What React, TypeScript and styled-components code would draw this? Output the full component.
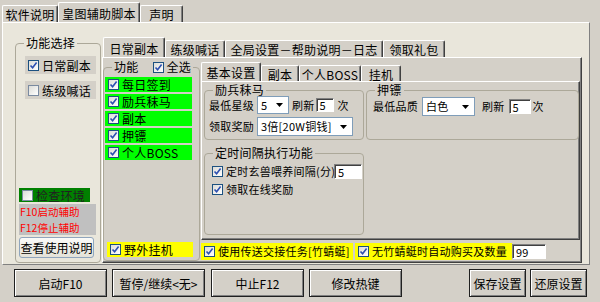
import React from 'react';
import styled, { createGlobalStyle, css } from 'styled-components';

const GlobalStyle = createGlobalStyle`
  html, body {
    margin: 0;
    padding: 0;
    background: #d4d0c8;
  }
  body {
    font-family: "Noto Sans CJK SC", "DejaVu Sans", sans-serif;
    font-size: 11px;
    letter-spacing: 0.25px;
    line-height: 13px;
    color: #000;
  }
`;

const Window = styled.div`
  width: 600px;
  height: 302px;
  box-sizing: border-box;
  padding-top: 2px;
  background: #d4d0c8;
  overflow: hidden;
`;

/* ---------- tabs ---------- */

const TabRow = styled.div<{ $h: number; $pl?: number }>`
  display: flex;
  align-items: flex-end;
  height: ${p => p.$h}px;
  padding-left: ${p => p.$pl ?? 0}px;
`;

const Tab = styled.div<{ $w: number; $active?: boolean; $h: number; $fs?: number }>`
  box-sizing: border-box;
  width: ${p => p.$w}px;
  height: ${p => (p.$active ? p.$h : p.$h - 3)}px;
  display: flex;
  align-items: center;
  justify-content: center;
  white-space: nowrap;
  font-size: ${p => p.$fs ?? 12}px;
  background: #d4d0c8;
  border-top: 1px solid #fff;
  border-left: 1px solid #fff;
  border-right: 1px solid #404040;
  box-shadow: inset -1px 0 #808080;
  border-radius: 2px 2px 0 0;
  padding-top: 1px;
`;

const MainPanel = styled.div`
  box-sizing: border-box;
  margin-left: 2px;
  width: 588px;
  height: 243px;
  background: #e9e6db;
  border-top: 1px solid #fff;
  border-left: 1px solid #fff;
  border-right: 1px solid #808080;
  border-bottom: 1px solid #808080;
  display: flex;
  align-items: flex-start;
  padding: 14px 0 0 12px;
`;

/* ---------- group boxes ---------- */

const Group = styled.fieldset<{ $w: number; $h: number }>`
  box-sizing: border-box;
  width: ${p => p.$w}px;
  height: ${p => p.$h}px;
  min-inline-size: 0;
  margin: 0;
  padding: 0;
  border: 1px solid #aca899;
  border-radius: 4px;
  display: flex;
  flex-direction: column;
`;

const Legend = styled.legend`
  margin-left: 8px;
  padding: 0 2px;
  line-height: 12px;
  font-size: 12px;
  display: flex;
  align-items: center;
  gap: 3px;
  white-space: nowrap;
`;

const Spacer = styled.div`
  flex: 1;
`;

/* ---------- controls ---------- */

const Box = styled.span<{ $off?: boolean }>`
  box-sizing: border-box;
  flex: none;
  width: 11px;
  height: 11px;
  border: 1px solid #1c5180;
  background: linear-gradient(135deg, #dcdcd7, #fff);
  display: inline-flex;
  align-items: center;
  justify-content: center;
  ${p => p.$off && css`border-color: #7a8aa0;`}
`;

const Check = ({ on = true }: { on?: boolean }) => (
  <Box $off={!on}>
    {on && (
      <svg width="9" height="9" viewBox="0 0 9 9">
        <path d="M1.5 4.5 L3.6 6.8 L7.6 1.6" fill="none" stroke="#2d4fb0" strokeWidth="1.6" />
      </svg>
    )}
  </Box>
);

const CheckRow = styled.div<{ $bg?: string; $w?: number; $h?: number; $color?: string; $fs?: number }>`
  box-sizing: border-box;
  display: flex;
  align-items: center;
  gap: 3px;
  white-space: nowrap;
  padding-left: 3px;
  width: ${p => (p.$w ? `${p.$w}px` : 'auto')};
  height: ${p => p.$h ?? 16}px;
  font-size: ${p => p.$fs ?? 11}px;
  background: ${p => p.$bg ?? 'transparent'};
  color: ${p => p.$color ?? '#000'};
  flex: none;
  overflow: hidden;
`;

const Select = styled.div<{ $w: number; $h?: number }>`
  box-sizing: border-box;
  width: ${p => p.$w}px;
  height: ${p => p.$h ?? 19}px;
  border: 1px solid #7f9db9;
  background: #fff;
  display: flex;
  align-items: center;
  justify-content: space-between;
  padding: 0 5px 0 3px;
  white-space: nowrap;
  flex: none;
`;

const Arrow = () => (
  <svg width="7" height="4" viewBox="0 0 7 4">
    <path d="M0 0 H7 L3.5 4 Z" fill="#000" />
  </svg>
);

const Input = styled.div<{ $w: number; $h?: number }>`
  box-sizing: border-box;
  width: ${p => p.$w}px;
  height: ${p => p.$h ?? 15}px;
  background: #fff;
  border-top: 1px solid #808080;
  border-left: 1px solid #808080;
  border-right: 1px solid #fff;
  border-bottom: 1px solid #fff;
  box-shadow: inset 1px 1px #404040;
  padding-left: 3px;
  display: flex;
  align-items: center;
  line-height: 12px;
  flex: none;
`;

const Label = styled.span<{ $ml?: number }>`
  margin-left: ${p => p.$ml ?? 0}px;
  white-space: nowrap;
  flex: none;
`;

const Row = styled.div<{ $mt?: number; $pl?: number }>`
  display: flex;
  align-items: center;
  margin-top: ${p => p.$mt ?? 0}px;
  padding-left: ${p => p.$pl ?? 0}px;
`;

/* ---------- left pane ---------- */

const LeftBody = styled.div`
  display: flex;
  flex-direction: column;
  flex: 1;
  padding: 7px 3px 4px 3px;
`;

const Notice = styled.div`
  margin-top: 2px;
  width: 77px;
  height: 31px;
  background: #c0c0c0;
  color: #ff0000;
  padding: 0 0 0 1px;
  box-sizing: border-box;
  display: flex;
  flex-direction: column;
  font-size: 10.5px;
  letter-spacing: 0;
`;

const NoticeLine = styled.div`
  height: 15.5px;
  line-height: 15.5px;
  white-space: nowrap;
`;

const XpButton = styled.div`
  box-sizing: border-box;
  margin-top: 2px;
  width: 75px;
  height: 21px;
  border: 1px solid #8fa5bd;
  border-radius: 3px;
  background: linear-gradient(#fbfbf9, #e4e2d8);
  display: flex;
  align-items: center;
  justify-content: center;
  white-space: nowrap;
  font-size: 12px;
  letter-spacing: 0;
`;

/* ---------- inner tabs ---------- */

const InnerTabs = styled.div`
  margin-left: 1px;
  width: 480px;
  display: flex;
  flex-direction: column;
`;

const Page = styled.div<{ $h: number; $w: number }>`
  box-sizing: border-box;
  width: ${p => p.$w}px;
  height: ${p => p.$h}px;
  background: #d4d0c8;
  border-top: 1px solid #fff;
  border-left: 1px solid #fff;
  border-right: 1px solid #404040;
  border-bottom: 1px solid #404040;
  box-shadow: inset -1px -1px #808080;
`;

const DailyPage = styled(Page)`
  display: flex;
  padding-top: 3px;
`;

const FuncBody = styled.div`
  display: flex;
  flex-direction: column;
  flex: 1;
  padding: 4px 0 3px 1px;
`;

const RightCol = styled.div`
  margin-left: 1px;
  margin-top: 1px;
  display: flex;
  flex-direction: column;
`;

const BasicPage = styled(Page)`
  display: flex;
  flex-direction: column;
  padding: 2px 0 0 2px;
`;

const GroupsRow = styled.div`
  display: flex;
  gap: 2px;
`;

const GroupBody = styled.div<{ $pl: number; $pt?: number }>`
  display: flex;
  flex-direction: column;
  padding: ${p => p.$pt ?? 0}px 0 0 ${p => p.$pl}px;
`;

const BottomChecks = styled.div`
  display: flex;
  align-items: center;
  margin-top: 3px;
  gap: 2px;
`;

/* ---------- bottom buttons ---------- */

const ButtonBar = styled.div`
  display: flex;
  margin-top: 4px;
  padding: 0 13px 0 14px;
`;

const Button = styled.div<{ $w: number; $ml?: number }>`
  box-sizing: border-box;
  width: ${p => p.$w}px;
  height: 28px;
  margin-left: ${p => p.$ml ?? 0}px;
  background: #d4d0c8;
  border: 1px solid #202020;
  box-shadow: inset 1px 1px #fff, inset -1px -1px #808080;
  display: flex;
  align-items: center;
  justify-content: center;
  white-space: nowrap;
  font-size: 12px;
  letter-spacing: 0;
`;

const Push = styled.div`
  margin-left: auto;
`;

const funcs = ['每日签到', '励兵秣马', '副本', '押镖', '个人BOSS'];

export default function App() {
  return (
    <>
      <GlobalStyle />
      <Window>
        <TabRow $h={20} $pl={2}>
          <Tab $w={56} $h={20}>软件说明</Tab>
          <Tab $w={82} $h={20} $active>皇图辅助脚本</Tab>
          <Tab $w={43} $h={20}>声明</Tab>
        </TabRow>

        <MainPanel>
          <Group $w={86} $h={226}>
            <Legend>功能选择</Legend>
            <LeftBody>
              <CheckRow $bg="#d4d0c8" $w={71} $h={18} $fs={12} style={{ marginLeft: 6 }}>
                <Check />日常副本
              </CheckRow>
              <CheckRow $bg="#d4d0c8" $w={71} $h={18} $fs={12} style={{ marginLeft: 6, marginTop: 7 }}>
                <Check on={false} />练级喊话
              </CheckRow>
              <Spacer />
              <CheckRow $bg="#008000" $w={71} $h={14} $color="#202020" $fs={12}>
                <Check on={false} />检查环境
              </CheckRow>
              <Notice>
                <NoticeLine>F10启动辅助</NoticeLine>
                <NoticeLine>F12停止辅助</NoticeLine>
              </Notice>
              <XpButton>查看使用说明</XpButton>
            </LeftBody>
          </Group>

          <InnerTabs>
            <TabRow $h={20} $pl={1}>
              <Tab $w={62} $h={20} $active>日常副本</Tab>
              <Tab $w={60} $h={20}>练级喊话</Tab>
              <Tab $w={158} $h={20}>全局设置－帮助说明－日志</Tab>
              <Tab $w={62} $h={20}>领取礼包</Tab>
            </TabRow>

            <DailyPage $w={480} $h={206}>
              <Group $w={97} $h={200}>
                <Legend>
                  功能<span style={{ width: 8 }} />
                  <Check />全选
                </Legend>
                <FuncBody>
                  {funcs.map(f => (
                    <CheckRow key={f} $bg="#00ff00" $w={87} $h={15} $fs={12} style={{ marginBottom: 2 }}>
                      <Check />
                      {f}
                    </CheckRow>
                  ))}
                  <Spacer />
                  <CheckRow $bg="#ffff00" $w={86} $h={15} $fs={12} style={{ marginLeft: 2 }}>
                    <Check />野外挂机
                  </CheckRow>
                </FuncBody>
              </Group>

              <RightCol>
                <TabRow $h={19}>
                  <Tab $w={60} $h={19} $active>基本设置</Tab>
                  <Tab $w={38} $h={19}>副本</Tab>
                  <Tab $w={62} $h={19}>个人BOSS</Tab>
                  <Tab $w={40} $h={19}>挂机</Tab>
                </TabRow>

                <BasicPage $w={379} $h={159}>
                  <GroupsRow>
                    <Group $w={160} $h={56}>
                      <Legend>励兵秣马</Legend>
                      <GroupBody $pl={4}>
                        <Row>
                          <Label>最低星级</Label>
                          <Select $w={32} $h={18} style={{ marginLeft: 3 }}>
                            5<Arrow />
                          </Select>
                          <Label $ml={3}>刷新</Label>
                          <Input $w={18} $h={14} style={{ marginLeft: 1 }}>5</Input>
                          <Label $ml={4}>次</Label>
                        </Row>
                        <Row $mt={3}>
                          <Label>领取奖励</Label>
                          <Select $w={96} style={{ marginLeft: 3 }}>
                            3倍[20W铜钱]<Arrow />
                          </Select>
                        </Row>
                      </GroupBody>
                    </Group>

                    <Group $w={213} $h={56}>
                      <Legend>押镖</Legend>
                      <GroupBody $pl={6} $pt={1}>
                        <Row>
                          <Label>最低品质</Label>
                          <Select $w={53} style={{ marginLeft: 4 }}>
                            白色<Arrow />
                          </Select>
                          <Label $ml={7}>刷新</Label>
                          <Input $w={22} $h={15} style={{ marginLeft: 4 }}>5</Input>
                          <Label $ml={2}>次</Label>
                        </Row>
                      </GroupBody>
                    </Group>
                  </GroupsRow>

                  <Group $w={160} $h={88} style={{ marginTop: 7 }}>
                    <Legend>定时间隔执行功能</Legend>
                    <GroupBody $pl={4} $pt={5}>
                      <Row>
                        <CheckRow $h={15} $w={125}>
                          <Check />定时玄兽喂养间隔(分)
                        </CheckRow>
                        <Input $w={28} $h={15}>5</Input>
                      </Row>
                      <Row $mt={3}>
                        <CheckRow $h={15}>
                          <Check />领取在线奖励
                        </CheckRow>
                      </Row>
                    </GroupBody>
                  </Group>
                </BasicPage>

                <BottomChecks>
                  <CheckRow $bg="#ffff00" $w={152} $h={17}>
                    <Check />使用传送交接任务[竹蜻蜓]
                  </CheckRow>
                  <CheckRow $bg="#ffff00" $w={157} $h={17}>
                    <Check />无竹蜻蜓时自动购买及数量
                  </CheckRow>
                  <Input $w={34} $h={15} style={{ marginLeft: -2 }}>99</Input>
                </BottomChecks>
              </RightCol>
            </DailyPage>
          </InnerTabs>
        </MainPanel>

        <ButtonBar>
          <Button $w={93}>启动F10</Button>
          <Button $w={93} $ml={5}>暂停/继续&lt;无&gt;</Button>
          <Button $w={93} $ml={6}>中止F12</Button>
          <Button $w={93} $ml={5}>修改热键</Button>
          <Push />
          <Button $w={57}>保存设置</Button>
          <Button $w={57} $ml={4}>还原设置</Button>
        </ButtonBar>
      </Window>
    </>
  );
}
